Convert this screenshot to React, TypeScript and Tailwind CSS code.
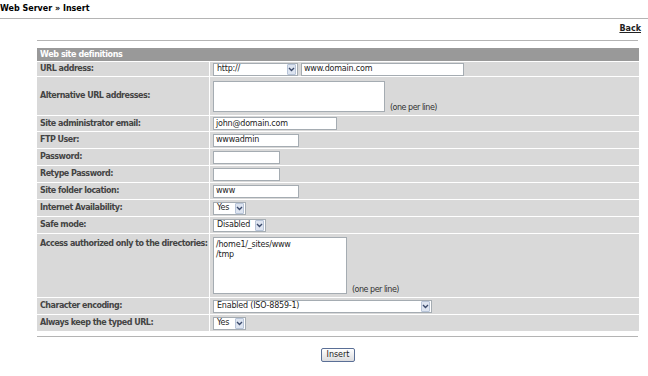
import React from "react";

const font = { fontFamily: '"DejaVu Sans", Verdana, sans-serif' };

function Arrow() {
  return (
    <span className="flex h-[11px] w-[9px] items-center justify-center rounded-[1px] border border-[#b7c4d8] bg-[#dde4f0]">
      <svg width="7" height="5" viewBox="0 0 7 5">
        <path d="M1 1 L3.5 3.5 L6 1" stroke="#3b4a6b" strokeWidth="1.4" fill="none" />
      </svg>
    </span>
  );
}

function Select({ value, w }: { value: string; w: string }) {
  return (
    <div className={`flex h-[13px] items-center justify-between border border-[#a5acb2] bg-white pl-[3px] pr-[1px] ${w}`}>
      <span className="text-[8px] leading-none tracking-[-0.2px] text-[#222]">{value}</span>
      <Arrow />
    </div>
  );
}

function Input({ value = "", w }: { value?: string; w: string }) {
  return (
    <div className={`flex h-[13px] items-center border border-[#a5acb2] bg-white pl-[2px] ${w}`}>
      <span className="text-[8px] leading-none tracking-[-0.2px] text-[#222]">{value}</span>
    </div>
  );
}

function Row({
  label,
  h,
  top = false,
  children,
}: {
  label: string;
  h: string;
  top?: boolean;
  children: React.ReactNode;
}) {
  return (
    <>
      <div
        className={`flex whitespace-nowrap bg-[#d9d9d9] pl-[3px] text-[8px] font-bold tracking-[-0.5px] text-[#444] ${h} ${
          top ? "items-start pt-[4px]" : "items-center"
        }`}
      >
        {label}
      </div>
      <div className={`flex items-center bg-[#d9d9d9] pl-[3px] ${h}`}>{children}</div>
    </>
  );
}

export default function App() {
  return (
    <div className="h-[376px] w-[648px] bg-white text-[#222]" style={font}>
      <div className="h-[18px] pt-[4px] text-[8px] font-bold leading-[10px] text-black">Web Server » Insert</div>
      <div className="h-px bg-[#b4b4b4]" />
      <div className="flex h-[21px] justify-end pr-[7px] pt-[5px]">
        <span className="text-[8px] font-bold leading-[10px] text-[#222] underline">Back</span>
      </div>
      <div className="ml-[37px] mr-[10px] h-px bg-[#b4b4b4]" />
      <div className="ml-[37px] mt-[7px] w-[602px]">
        <div className="grid grid-cols-[172px_1fr] gap-px bg-white">
          <div className="col-span-2 flex h-[13px] items-center bg-[#999999] pl-[3px] text-[8px] font-bold tracking-[-0.4px] text-white">
            Web site definitions
          </div>
          <Row label="URL address:" h="h-[14px]">
            <div className="flex gap-[3px]">
              <Select value="http://" w="w-[85px]" />
              <Input value="www.domain.com" w="w-[163px]" />
            </div>
          </Row>
          <Row label="Alternative URL addresses:" h="h-[38px]">
            <div className="flex items-end gap-[5px]">
              <div className="h-[31px] w-[172px] border border-[#a5acb2] bg-white" />
              <span className="text-[8px] leading-none tracking-[-0.5px] text-[#333]">(one per line)</span>
            </div>
          </Row>
          <Row label="Site administrator email:" h="h-[15px]">
            <Input value="john@domain.com" w="w-[124px]" />
          </Row>
          <Row label="FTP User:" h="h-[16px]">
            <Input value="wwwadmin" w="w-[86px]" />
          </Row>
          <Row label="Password:" h="h-[16px]">
            <Input w="w-[67px]" />
          </Row>
          <Row label="Retype Password:" h="h-[16px]">
            <Input w="w-[67px]" />
          </Row>
          <Row label="Site folder location:" h="h-[16px]">
            <Input value="www" w="w-[86px]" />
          </Row>
          <Row label="Internet Availability:" h="h-[16px]">
            <Select value="Yes" w="w-[33px]" />
          </Row>
          <Row label="Safe mode:" h="h-[16px]">
            <Select value="Disabled" w="w-[53px]" />
          </Row>
          <Row label="Access authorized only to the directories:" h="h-[63px]" top>
            <div className="flex items-end gap-[5px]">
              <div className="h-[57px] w-[134px] border border-[#a5acb2] bg-white pl-[2px] pt-[2px] text-[8px] leading-[10px] tracking-[-0.2px] text-[#222]">
                /home1/_sites/www
                <br />
                /tmp
              </div>
              <span className="text-[8px] leading-none tracking-[-0.5px] text-[#333]">(one per line)</span>
            </div>
          </Row>
          <Row label="Character encoding:" h="h-[16px]">
            <Select value="Enabled (ISO-8859-1)" w="w-[219px]" />
          </Row>
          <Row label="Always keep the typed URL:" h="h-[16px]">
            <Select value="Yes" w="w-[33px]" />
          </Row>
        </div>
        <div className="mt-[5px] h-px w-[601px] bg-[#b4b4b4]" />
        <div className="flex justify-center pt-[11px]">
          <div className="flex h-[14px] w-[34px] items-center justify-center rounded-[2px] border border-[#5a6f96] bg-gradient-to-b from-white to-[#dcdcde] text-[8px] leading-none text-[#222]">
            Insert
          </div>
        </div>
      </div>
    </div>
  );
}
